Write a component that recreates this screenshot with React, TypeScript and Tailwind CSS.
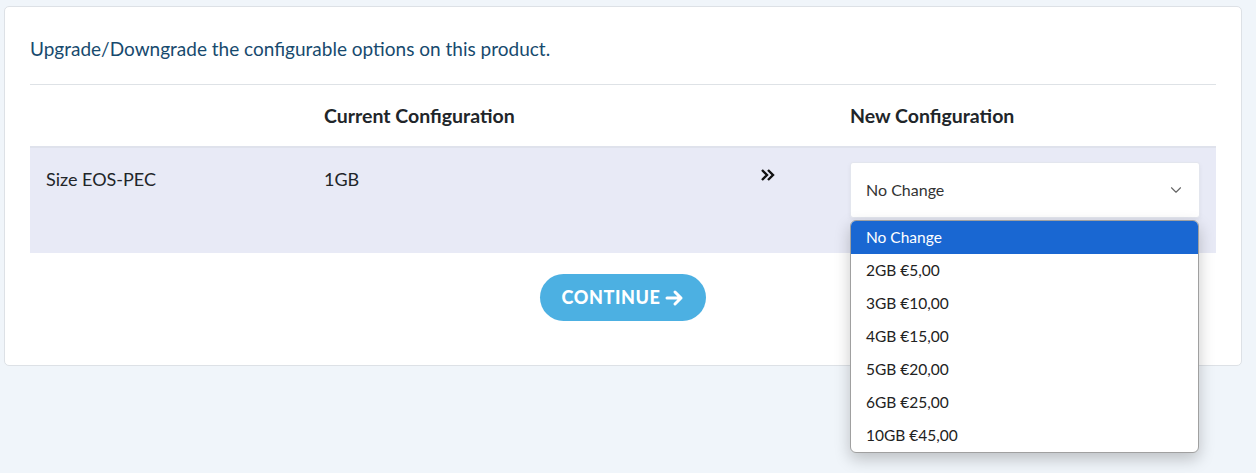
import { ChevronDown } from 'lucide-react';

const options = ['No Change', '2GB €5,00', '3GB €10,00', '4GB €15,00', '5GB €20,00', '6GB €25,00', '10GB €45,00'];

export default function App() {
  return (
    <div
      className="min-h-[473px] bg-[#f0f5fa] pt-[6px] pl-[4px] pr-[14px]"
      style={{ fontFamily: 'Lato, "Liberation Sans", sans-serif' }}
    >
      <div className="bg-white border border-[#dde1e6] rounded-[5px] px-[25px] pt-[30px] pb-[44px]">
        <p className="text-[19px] leading-[24px] text-[#174a6e]">
          Upgrade/Downgrade the configurable options on this product.
        </p>

        <div className="mt-[23px] border-t border-[#dee2e6]">
          {/* header row */}
          <div className="grid grid-cols-[278px_444px_82px_1fr] h-[61px] items-center text-[19.5px] font-bold text-[#212529]">
            <div />
            <div className="px-4">Current Configuration</div>
            <div />
            <div className="px-4">New Configuration</div>
          </div>

          {/* option row */}
          <div className="grid grid-cols-[278px_444px_82px_1fr] h-[107px] bg-[#e8eaf6] border-t-2 border-[#dfe2ec] text-[18px] text-[#212529]">
            <div className="px-4 pt-[18px]">Size EOS-PEC</div>
            <div className="px-4 pt-[18px]">1GB</div>
            <div className="pt-[20px] pl-[8px]">
              <svg width="16" height="14" viewBox="0 0 16 14">
                <path d="M2 2 L7 7 L2 12 M8 2 L13 7 L8 12" fill="none" stroke="#111" strokeWidth="2.4" />
              </svg>
            </div>
            <div className="px-4 pt-[14px] relative">
              <div className="h-[56px] bg-white rounded-[3px] border border-[#e3e6ee] shadow-[0_2px_4px_rgba(0,0,0,0.05)] flex items-center justify-between pl-[15px] pr-[14px] text-[16px] text-[#333]">
                <span>No Change</span>
                <ChevronDown className="w-[18px] h-[18px] text-[#666]" strokeWidth={1.5} />
              </div>

              {/* open option list */}
              <div className="absolute left-[16px] top-[72px] w-[349px] bg-white border border-[#a0a0a0] rounded-[6px] shadow-[0_6px_16px_rgba(0,0,0,0.22)] overflow-hidden z-10 text-[15.5px]">
                {options.map((o, i) => (
                  <div
                    key={o}
                    className={
                      i === 0
                        ? 'h-[33px] flex items-center px-[15px] bg-[#1967d2] text-white'
                        : 'h-[33px] flex items-center px-[15px] text-[#222]'
                    }
                  >
                    {o}
                  </div>
                ))}
              </div>
            </div>
          </div>

          <div className="flex justify-center pt-[21px]">
            <button className="h-[47px] w-[166px] rounded-full bg-[#4cb0e2] text-white font-black text-[18px] tracking-[0.6px] flex items-center justify-center gap-[5px]">
              CONTINUE
              <svg width="19" height="18" viewBox="0 0 19 18">
                <path d="M2 9 H16 M10 3 L16 9 L10 15" fill="none" stroke="white" strokeWidth="3" strokeLinecap="round" strokeLinejoin="round" />
              </svg>
            </button>
          </div>
        </div>
      </div>
    </div>
  );
}
